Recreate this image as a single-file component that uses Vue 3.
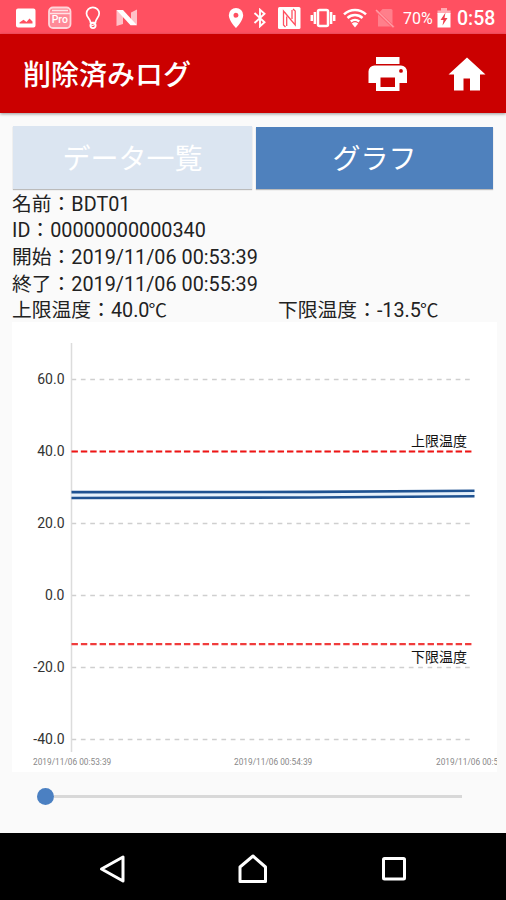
<script setup>
import { computed, ref } from 'vue'

const tabs = ['データ一覧', 'グラフ']
const activeTab = ref(1)

//--------- log -------------
const log = {
  name: 'BDT01',
  id: '00000000000340',
  start: '2019/11/06 00:53:39',
  end: '2019/11/06 00:55:39',
  upper: 40.0,
  lower: -13.5
}

//--------- chart -------------
const ticks = [60, 40, 20, 0, -20, -40]
// the last label runs past the edge of the chart
const times = [
  { x: 21, label: '2019/11/06 00:53:39' },
  { x: 222, label: '2019/11/06 00:54:39' },
  { x: 424, label: '2019/11/06 00:5' }
]
const left = 59.5
const right = 460.5

const toY = (t) => 273.5 - t * 3.6
const upperY = computed(() => toY(log.upper))
const lowerY = computed(() => toY(log.lower))

const position = ref(0)
</script>

<template>
  <div class="screen">
    <div class="status">
      <div class="status-left">
        <svg width="20" height="20" viewBox="0 0 20 20">
          <path fill="#fff" fill-rule="evenodd" d="M2 .5h15.500a2 2 0 0 1 2 2v15a2 2 0 0 1-2 2H2a2 2 0 0 1-2-2v-15a2 2 0 0 1 2-2zM3.500 15.500h13v-2l-3-3-3 3.500-3-2.300-4 2.800z" />
        </svg>
        <svg class="pro" width="24" height="24" viewBox="0 0 24 24">
          <rect x="1" y="1.500" width="21.500" height="20.500" rx="4" fill="#ff8a98" stroke="#ffd5da" stroke-width="1.800" />
          <path d="M4 4.500h16M2 7.500h20" stroke="#ffe3e6" stroke-width="1.300" />
          <text x="11.800" y="17" text-anchor="middle" font-size="10.500" font-weight="500" fill="#fff">Pro</text>
        </svg>
        <svg class="bulb" width="16" height="24" viewBox="0 0 16 24" fill="none" stroke="#fff" stroke-width="1.700">
          <path d="M5.500 16.500c0-3.500-4-5-4-9a6.300 6 0 0 1 12.700 0c0 4-3.700 5.500-3.700 9z" />
          <circle cx="8" cy="19.500" r="2.600" stroke-width="1.800" />
          <path d="M6 20l4-1.500" stroke-width="1.300" />
        </svg>
        <svg class="n" width="22" height="18" viewBox="0 0 22 18">
          <path d="M.5 1L7 5v10L.5 17zM15 3.500l6-3V16l-6-3z" fill="#ffc0c7" />
          <path d="M.5 1h6.500L21 16.200h-6.500z" fill="#fff" />
        </svg>
      </div>
      <div class="status-right">
        <svg width="16" height="20" viewBox="0 0 16 20">
          <path fill="#fff" fill-rule="evenodd" d="M8 0a7.200 7.200 0 0 1 7.200 7.200C15.200 12.500 8 20 8 20S.8 12.500.8 7.200A7.200 7.200 0 0 1 8 0zM8 4.700a2.500 2.500 0 1 0 0 5 2.500 2.500 0 0 0 0-5z" />
        </svg>
        <svg class="bt" width="14" height="20" viewBox="0 0 14 20" fill="none" stroke="#fff" stroke-width="1.900">
          <path d="M1.500 5l10 9.300L7 18.300V1.700l4.500 4L1.500 15" />
        </svg>
        <svg class="nfc" width="23" height="22" viewBox="0 0 23 22">
          <rect width="22.500" height="22" rx="1.500" fill="#fff" />
          <path d="M7.500 20L5.500 18V4l10.500 12.500M15 2l2.200 2v14L6.800 5.500" fill="none" stroke="#ff5061" stroke-width="1.300" />
          <path d="M8.700 9.500V19M14 3v9" fill="none" stroke="#ff5061" stroke-width="1.300" />
        </svg>
        <svg class="vibrate" width="26" height="20" viewBox="0 0 26 20">
          <rect x="8" y="2" width="10" height="16" rx="1.500" fill="none" stroke="#fff" stroke-width="2.500" />
          <path d="M4.900 4v12M1.800 7v6M21.100 4v12M24.200 7v6" stroke="#fff" stroke-width="2.500" />
        </svg>
        <svg class="wifi" width="24" height="20" viewBox="0 0 24 20" fill="none" stroke="#fff" stroke-width="2.500">
          <path d="M1 6.300a16 16 0 0 1 22 0M4.500 10a11 11 0 0 1 15 0M7.800 13.500a6.500 6.500 0 0 1 8.400 0" />
          <path d="M8.800 15.500a5 5 0 0 1 6.400 0L12 19.500z" fill="#fff" stroke="none" />
        </svg>
        <svg class="sim" width="20" height="20" viewBox="0 0 20 20">
          <path d="M7.500 1H16a1.500 1.500 0 0 1 1.500 1.500v16H3V6z" fill="#ff7f8b" />
          <path d="M1.500 3l17.500 16.500" stroke="#ff5f6e" stroke-width="3" />
          <path d="M1 2l17.500 17" stroke="#ff9ca5" stroke-width="1.500" />
        </svg>
        <span class="percent">70%</span>
        <svg class="battery" width="14" height="20" viewBox="0 0 14 20">
          <path d="M4 0h6v2.500h3.500V6H.5V2.500H4z" fill="#ffabb3" />
          <path d="M.5 5h13v14.500H.5z" fill="#fff" />
          <path d="M8.500 4.500L3.500 12h3L5.500 17.500l5-7.500h-3z" fill="#f0404f" />
        </svg>
        <span class="clock">0:58</span>
      </div>
    </div>

    <header class="bar">
      <h1>削除済みログ</h1>
      <svg class="print" width="40" height="36" viewBox="0 0 40 36">
        <path fill="#fff" fill-rule="evenodd" d="M8 1h23.500v7H8zM6.500 9.500H33a6 6 0 0 1 6 6V27h-7.500v8H8v-8H.5V15.500a6 6 0 0 1 6-6zM12.500 21.500v9.500h14.500v-9.500zM33 13a1.900 1.900 0 1 0 0 3.800 1.900 1.900 0 0 0 0-3.800z" />
      </svg>
      <svg class="home" width="38" height="34" viewBox="0 0 38 34">
        <path fill="#fff" d="M19 .5l18.500 17H32V33.500H22V21.500h-6.500v12H6V17.500H.5z" />
      </svg>
    </header>

    <main>
      <div class="tabs">
        <button v-for="(tab, index) in tabs" :key="index"
                :class="{ active: activeTab === index }"
                @click="activeTab = index">{{ tab }}</button>
      </div>

      <div class="info">
        <p>名前：{{ log.name }}</p>
        <p>ID：{{ log.id }}</p>
        <p>開始：{{ log.start }}</p>
        <p>終了：{{ log.end }}</p>
        <div class="limits">
          <p>上限温度：{{ log.upper.toFixed(1) }}<span class="unit">℃</span></p>
          <p>下限温度：{{ log.lower.toFixed(1) }}<span class="unit">℃</span></p>
        </div>
      </div>

      <svg class="chart" width="485" height="450" viewBox="0 0 485 450">
        <g v-for="t in ticks" :key="t">
          <line :x1="left" :x2="right" :y1="toY(t)" :y2="toY(t)" class="grid" />
          <text x="52.500" :y="toY(t) + 4" class="tick">{{ t.toFixed(1) }}</text>
        </g>
        <line :x1="left" :x2="left" y1="21" y2="430" class="axis" />
        <line :x1="left" :x2="right" :y1="upperY" :y2="upperY" class="limit" />
        <line :x1="left" :x2="right" :y1="lowerY" :y2="lowerY" class="limit low" />
        <text x="455" :y="upperY - 5.500" class="limit-label">上限温度</text>
        <text x="455" :y="lowerY + 18" class="limit-label">下限温度</text>
        <path d="M59.500 172.800L462.500 171.200" class="halo" />
        <path d="M59.500 170.100L300 169.900L462.500 168.700" class="series" />
        <path d="M59.500 176L300 175.500L462.500 174.200" class="series" />
        <text v-for="time in times" :key="time.x" :x="time.x" y="443" class="time">{{ time.label }}</text>
      </svg>

      <div class="slider">
        <div class="thumb" :style="{ marginLeft: position + '%' }"></div>
        <div class="track"></div>
      </div>
    </main>

    <nav>
      <svg width="28" height="30" viewBox="0 0 28 30">
        <path d="M25 3v24L3.500 15z" />
      </svg>
      <svg width="30" height="30" viewBox="0 0 30 30">
        <path d="M2 27.500V13L15 2l12.500 11v14.500z" />
      </svg>
      <svg width="28" height="30" viewBox="0 0 28 30">
        <rect x="3.500" y="4.500" width="21" height="20.500" rx="1" />
      </svg>
    </nav>
  </div>
</template>

<style>
body {
  margin: 0;
}
</style>

<style scoped>
.screen {
  width: 506px;
  height: 900px;
  display: flex;
  flex-direction: column;
  background: #fafafa;
  font-family: Roboto, "Noto Sans CJK JP", sans-serif;
  overflow: hidden;
}
svg {
  flex: none;
  display: block;
}
.status {
  height: 34px;
  background: #ff5061;
  display: flex;
  justify-content: space-between;
  align-items: center;
  box-sizing: border-box;
  padding: 1px 11px 0 16px;
  color: #fff;
}
.status-left, .status-right {
  display: flex;
  align-items: center;
}
.pro {
  margin-left: 12px;
}
.bulb {
  margin-left: 13px;
}
.n {
  margin-left: 15px;
}
.bt {
  margin-left: 9px;
}
.nfc {
  margin-left: 11px;
}
.vibrate {
  margin-left: 9px;
}
.wifi {
  margin-left: 7px;
}
.sim {
  margin-left: 8px;
}
.percent {
  width: 34px;
  margin-left: 8px;
  padding-top: 2px;
  font-size: 16px;
  line-height: 30px;
}
.clock {
  width: 38px;
  margin-left: 6px;
  padding-top: 2px;
  font-size: 19.5px;
  font-weight: 500;
  line-height: 30px;
}
.bar {
  position: relative;
  height: 79px;
  box-sizing: border-box;
  display: flex;
  align-items: center;
  padding: 0 20px 0 23px;
  background: #cb0000;
  box-shadow: 0 1px 3px rgba(0, 0, 0, 0.4);
}
h1 {
  flex: 1;
  margin: 0;
  padding-top: 5px;
  color: #fff;
  font-size: 28px;
  font-weight: 500;
  line-height: 40px;
}
.home {
  margin-left: 40px;
}
main {
  flex: 1;
  display: flex;
  flex-direction: column;
  padding: 13px 9px 0 12px;
}
.tabs {
  display: flex;
  gap: 4px;
  padding: 0 4px 0 1px;
}
.tabs button {
  width: 239px;
  height: 63px;
  flex: none;
  padding: 0 0 1px;
  border: 0;
  background: #dbe5f1;
  box-shadow: 0 1px 1px rgba(0, 0, 0, 0.25);
  color: #fff;
  font-family: inherit;
  font-size: 28px;
}
.tabs button.active {
  width: 237px;
  height: 62px;
  margin-top: 1px;
  padding-bottom: 3px;
  background: #4f81bd;
}
.info {
  padding-top: 2.5px;
  margin-bottom: -3px;
  color: #222;
  font-size: 19.8px;
  line-height: 26.7px;
}
p {
  margin: 0;
}
.limits {
  display: flex;
}
.limits p {
  width: 266px;
  flex: none;
  white-space: nowrap;
}
.unit {
  margin-left: -1px;
  font-size: 18.5px;
  line-height: 1;
}
.chart {
  background: #fff;
}
.grid {
  stroke: #cfcfcf;
  stroke-width: 1.3;
  stroke-dasharray: 4.7 4.67;
}
.axis {
  stroke: #dcdcdc;
  stroke-width: 1.5;
}
.tick {
  font-size: 14px;
  fill: #333;
  text-anchor: end;
}
.limit {
  stroke: #f01414;
  stroke-width: 2.2;
  stroke-dasharray: 6.4 2.97;
}
.low {
  stroke: #f03c3c;
}
.limit-label {
  font-size: 14px;
  fill: #111;
  text-anchor: end;
}
.series {
  fill: none;
  stroke: #1f5291;
  stroke-width: 2.6;
}
.halo {
  fill: none;
  stroke: #e6f1fb;
  stroke-width: 5;
}
.time {
  font-size: 8.3px;
  fill: #888;
}
.slider {
  display: flex;
  align-items: center;
  height: 48px;
  padding: 0 35px 0 25px;
}
.thumb {
  width: 17px;
  height: 17px;
  flex: none;
  border-radius: 50%;
  background: #4b80c2;
}
.track {
  flex: 1;
  height: 3px;
  background: #d8d8d8;
}
nav {
  height: 67px;
  display: flex;
  align-items: center;
  justify-content: center;
  gap: 112px;
  padding: 4px 0 0;
  box-sizing: border-box;
  background: #000;
}
nav svg {
  fill: none;
  stroke: #fff;
  stroke-width: 3;
  stroke-linejoin: round;
}
</style>
